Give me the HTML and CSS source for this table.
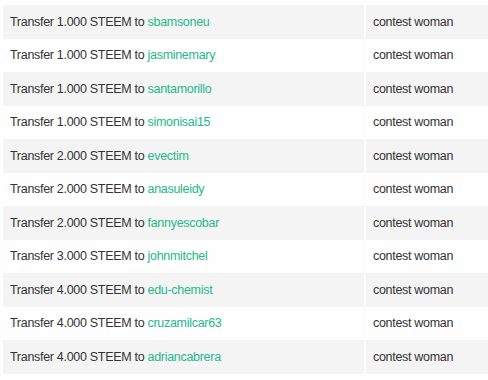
FILE: index.html
```html
<!DOCTYPE html>
<html>
<head>
<meta charset="utf-8">
<link rel="stylesheet" href="styles.css">
</head>
<body>
<table class="tx">
<tbody>
<tr><td class="op">Transfer 1.000 STEEM to <a class="acct">sbamsoneu</a></td><td class="memo">contest woman</td></tr>
<tr><td class="op">Transfer 1.000 STEEM to <a class="acct">jasminemary</a></td><td class="memo">contest woman</td></tr>
<tr><td class="op">Transfer 1.000 STEEM to <a class="acct">santamorillo</a></td><td class="memo">contest woman</td></tr>
<tr><td class="op">Transfer 1.000 STEEM to <a class="acct">simonisai15</a></td><td class="memo">contest woman</td></tr>
<tr><td class="op">Transfer 2.000 STEEM to <a class="acct">evectim</a></td><td class="memo">contest woman</td></tr>
<tr><td class="op">Transfer 2.000 STEEM to <a class="acct">anasuleidy</a></td><td class="memo">contest woman</td></tr>
<tr><td class="op">Transfer 2.000 STEEM to <a class="acct">fannyescobar</a></td><td class="memo">contest woman</td></tr>
<tr><td class="op">Transfer 3.000 STEEM to <a class="acct">johnmitchel</a></td><td class="memo">contest woman</td></tr>
<tr><td class="op">Transfer 4.000 STEEM to <a class="acct">edu-chemist</a></td><td class="memo">contest woman</td></tr>
<tr><td class="op">Transfer 4.000 STEEM to <a class="acct">cruzamilcar63</a></td><td class="memo">contest woman</td></tr>
<tr><td class="op">Transfer 4.000 STEEM to <a class="acct">adriancabrera</a></td><td class="memo">contest woman</td></tr>
</tbody>
</table>
</body>
</html>
```
FILE: styles.css
```css
html, body {
  margin: 0;
  padding: 0;
  background: #fefefe;
}
body {
  padding: 5px 0 0 3px;
  font-family: "Liberation Sans", Arial, sans-serif;
  font-size: 12.5px;
  letter-spacing: -0.3px;
  color: #333;
}
.tx {
  border-collapse: collapse;
  width: 485px;
}
.tx tr {
  height: 33.5px;
}
.tx tr:nth-child(odd) {
  background: #f4f4f4;
}
.tx td {
  padding: 0 0 0 7px;
  vertical-align: middle;
}
.tx td.op {
  width: 354px;
  border-right: 2px solid #fbfbfb;
}
.acct {
  color: #1fb88a;
  text-decoration: none;
}
```
